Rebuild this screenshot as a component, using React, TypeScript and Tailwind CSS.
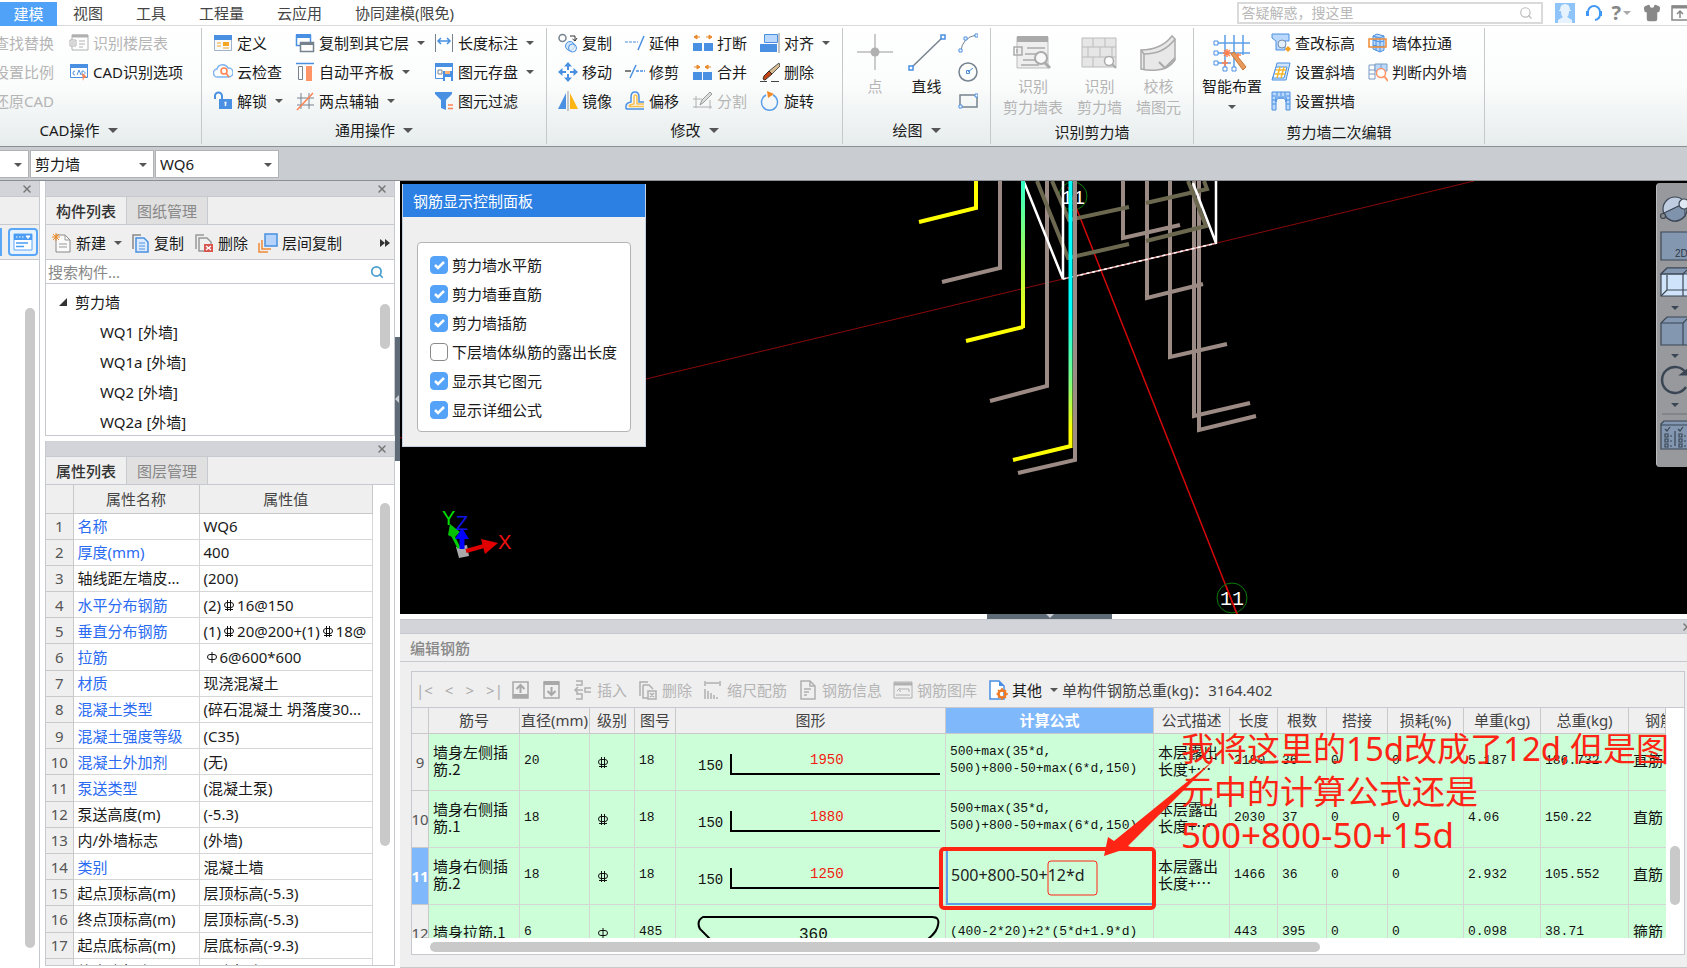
import React from 'react';
import { Search, Shirt, X } from 'lucide-react';

const BLUE = '#4a90e2';
const GREY = '#b0b0b0';
const INK = '#76838f';

/* 20x20 的工具图标 */
const icons: Record<string, React.ReactNode> = {
  floorTable: (
    <g stroke={GREY} fill="none">
      <path d="M3 2h16v15H3z" />
      <path d="M3 3h16" strokeWidth="3" />
      <path d="M1 7h6v6H1z" fill="#fff" />
      <path d="M3 8v4M5 8v4M10 8h6M10 11h6M10 14h4" />
    </g>
  ),
  cadOptions: (
    <g>
      <path d="M1.500 2.500h17v13h-17z" fill="#fff" stroke={BLUE} />
      <path d="M1 2h18v4H1z" fill={BLUE} />
      <path d="M6 9a2 2 0 1 0 0 4M8 13l2-5 2 5M13 9v4c4 0 4-4 0-4" fill="none" stroke={BLUE} />
      <path d="M13 11l5 4-3 1-1 3z" fill="#ff8250" />
    </g>
  ),
  define: (
    <g>
      <path d="M1.500 2.500h17v15h-17z" fill="#f7f9fb" stroke="#9fb4c8" />
      <path d="M1 2h18v5H1z" fill={BLUE} />
      <path d="M4 10h4M4 13h4M10 15h6" stroke="#f5a623" />
      <path d="M10 9h6v4h-6z" fill="#f5a623" />
    </g>
  ),
  cloud: (
    <g fill="none">
      <path d="M5 15a4 4 0 0 1-1-8 6 6 0 0 1 11-1 4.500 4.500 0 0 1 1 9z" stroke="#7db4ef" strokeWidth="1.500" />
      <circle cx="11" cy="9" r="3" stroke="#ff8250" strokeWidth="1.500" />
      <path d="M13 11l3 4" stroke="#ff8250" strokeWidth="1.500" />
    </g>
  ),
  unlock: (
    <g>
      <path d="M2 8V5a3.500 3.500 0 0 1 7 0v4" fill="none" stroke={BLUE} strokeWidth="2" />
      <path d="M6 8h13v10H6z" fill={BLUE} />
      <path d="M12.500 11v4M11.500 11.500h2" stroke="#fff" strokeWidth="1.500" />
    </g>
  ),
  copyFloor: (
    <g>
      <path d="M1.500 2.500h14v10h-14z" fill="#fff" stroke={BLUE} strokeWidth="1.500" />
      <path d="M1 1h15v4H1z" fill={BLUE} />
      <path d="M5.500 9.500h13v9h-13z" fill="#fff" stroke={INK} strokeWidth="1.500" />
      <path d="M5 9h14v3H5z" fill={INK} />
    </g>
  ),
  alignSlab: (
    <g>
      <path d="M1 1.500h18" stroke={BLUE} strokeWidth="1.500" />
      <path d="M3.500 4.500h4v13h-4z" fill="#fff" stroke={INK} />
      <path d="M11 4h6v15h-6z" fill="#ff9466" />
    </g>
  ),
  auxAxis: (
    <g stroke={INK} fill="none">
      <path d="M6 2v16M14 2v16M2 7h17M2 14h17" />
      <path d="M2 19L18 2" stroke="#ff8250" strokeWidth="1.500" />
    </g>
  ),
  dimension: (
    <g fill="none">
      <path d="M1.500 1v18M18.500 1v18" stroke={INK} />
      <path d="M4 8h12M7 5L4 8l3 3M13 5l3 3-3 3" stroke={BLUE} strokeWidth="1.500" />
    </g>
  ),
  save: (
    <g>
      <path d="M1.500 2.500h17v14h-17z" fill="#fff" stroke={BLUE} />
      <path d="M1 1h18v4H1z" fill={BLUE} />
      <path d="M4 8h4v4H4z" fill="none" stroke={INK} />
      <path d="M9 9h10v10H9z" fill={BLUE} />
      <path d="M11 9h5v3h-5z" fill="#ffb27a" />
      <path d="M11 15h6v4h-6z" fill="#fff" />
    </g>
  ),
  filter: (
    <g>
      <path d="M1 1h17v2l-6 6v10l-5-2V9L1 3z" fill={BLUE} />
      <path d="M14 14h5M14 17.500h5" stroke="#ff8250" strokeWidth="1.500" />
    </g>
  ),
  copy: (
    <g fill="none">
      <circle cx="4.500" cy="5" r="3.500" stroke={INK} strokeWidth="1.500" />
      <path d="M12 3h5v5M14.500 6L17 8l2-3" stroke="#333" />
      <circle cx="12" cy="13" r="4.500" fill="#cfe5fb" stroke={BLUE} />
      <circle cx="14.500" cy="15" r="4" fill="#e9f4fe" fillOpacity=".6" stroke={BLUE} />
    </g>
  ),
  move: (
    <g fill={BLUE}>
      <path d="M10 0l4 4.500H6zM10 20l4-4.500H6zM0 10l4.500-4v8zM20 10l-4.500-4v8z" />
      <path d="M10 4v4M10 12v4M4 10h4M12 10h4" stroke={BLUE} strokeWidth="2" />
    </g>
  ),
  mirror: (
    <g>
      <path d="M8 2v16H0z" fill={BLUE} />
      <path d="M12 2v16h8z" fill="#fdb515" />
      <path d="M10 0v20" stroke="#999" />
    </g>
  ),
  extend: (
    <g fill="none">
      <path d="M0 9h13" stroke={BLUE} strokeDasharray="3 1" />
      <path d="M19 3l-6 14" stroke={BLUE} strokeWidth="1.500" />
    </g>
  ),
  trim: (
    <g fill="none" strokeWidth="1.500">
      <path d="M0 9h6" stroke="#555" />
      <path d="M11 3L5 16" stroke={BLUE} />
      <path d="M11 9h9" stroke={BLUE} strokeDasharray="3 1" />
    </g>
  ),
  offset: (
    <g fill="none" strokeLinejoin="round">
      <path d="M1 18v-3q0-3 5-4V6q0-5 4-5t4 5v5h5M1 18h18" stroke={BLUE} strokeWidth="1.500" />
      <path d="M4 15.500q0-2 5-2.500V6q0-2 1-2 2 0 2 2v7h7M4 15.500h15" stroke="#f9bf4d" strokeWidth="1.500" />
    </g>
  ),
  breakUp: (
    <g>
      <path d="M0 10h9v8H0zM11 10h9v8h-9z" fill={BLUE} />
      <path d="M1 4h6M1 4l3-2v4zM13 4h6M19 4l-3-2v4z" fill="#e8892b" stroke="#e8892b" />
    </g>
  ),
  merge: (
    <g>
      <path d="M0 10h9v8H0zM10 10h9v8h-9z" fill={BLUE} />
      <path d="M1 5h6M7 5L4 3v4zM12 5h6M12 5l3-2v4z" fill="#e8892b" stroke="#e8892b" />
    </g>
  ),
  split: (
    <g stroke={GREY} fill="none">
      <path d="M3 5v12M17 9v9M0 8h9M0 16h19" />
      <path d="M7 14l2-5 8-8 2 2-8 8z" fill="#ddd" stroke="#999" />
    </g>
  ),
  align: (
    <g>
      <path d="M4.500 1.500h13v8h-13z" fill="#b9d8fb" stroke={BLUE} />
      <path d="M0 11h17v8H0z" fill={BLUE} />
      <path d="M19 0v20" stroke="#888" />
    </g>
  ),
  erase: (
    <g>
      <path d="M19 1L9 9l3 3 8-8z" fill="#d6bb92" stroke="#555" />
      <path d="M9 9l-5 5q-2 4 1 4l7-6z" fill="#c4471b" stroke="#3b2a1c" />
      <path d="M0 19.500h7M11 19.500h8" stroke="#444" />
    </g>
  ),
  rotate: (
    <g fill="none">
      <path d="M13 4a8 8 0 1 1-7 0" stroke="#5b9fe8" strokeWidth="1.500" />
      <path d="M7 0l7 3-6 4z" fill="#f08a24" />
    </g>
  ),
  arc: (
    <g fill="none" stroke={BLUE}>
      <path d="M3 18Q4 5 18 2" stroke={INK} />
      <path d="M1 16h3v3H1zM6 4h3v3H6zM17 1h3v3h-3z" fill="#fff" />
    </g>
  ),
  circle: (
    <g fill="none">
      <circle cx="10" cy="10" r="9" stroke={INK} strokeWidth="1.500" />
      <path d="M10 10l5-4M8.500 8.500h3v3h-3z" stroke={BLUE} />
    </g>
  ),
  rect: (
    <g fill="none">
      <path d="M2 4h17v12H2z" stroke={INK} strokeWidth="1.500" />
      <path d="M1 14h3v3H1zM17 3h3v3h-3z" fill="#fff" stroke={BLUE} />
    </g>
  ),
  elevation: (
    <g>
      <path d="M1 1h17v7h-4v9H5V8L1 5z" fill="#b9d8fb" stroke={BLUE} />
      <circle cx="11" cy="11" r="4" fill="#e3effb" stroke="#7b8ea8" />
      <path d="M17 13l3 3-3 3-3-3z" fill="#f5a11f" />
    </g>
  ),
  inclined: (
    <g fill="none">
      <path d="M6 1h13l-4 17H1L5 5z" fill="#cfe4fb" stroke={BLUE} />
      <path d="M5 5h11l-3 11H2z" fill="#fff" stroke={BLUE} />
      <path d="M5 8h10M4 12h10M9 5L6 16M13 5l-3 11" stroke="#f5b72a" strokeWidth="1.500" />
    </g>
  ),
  arch: (
    <g>
      <path d="M1 1h18v18h-4V7H5v12H1z" fill="#b9d8fb" stroke={BLUE} />
      <path d="M5 11q0-4 5-4t5 4V6H5z" fill="#b9d8fb" stroke={BLUE} />
      <path d="M1 5h4M1 9h4M1 13h4M15 5h4M15 9h4M15 13h4M6 1v4M10 1v4M14 1v4" stroke={BLUE} />
    </g>
  ),
  wallThrough: (
    <g fill="none" stroke={BLUE}>
      <path d="M5 3l4-2 7 2v14l-4 2-7-3z" fill="#b9d8fb" />
      <path d="M5 7l7 2 4-1M5 12l7 2 4-1M12 5v14M8 4v13M5 3l7 2 4-2" />
      <path d="M1 6h17v8H1z" stroke="#f08a34" strokeWidth="1.500" />
    </g>
  ),
  innerOuter: (
    <g fill="none" stroke="#7b9cc2">
      <path d="M1 3h6v14H1zM1 8h6M1 12h6" />
      <path d="M7 2h12v7H7zM13 2v7" fill="#b9d8fb" />
      <circle cx="13" cy="11" r="4.500" fill="#fff" stroke="#ff9466" strokeWidth="1.500" />
      <path d="M16 14l4 5" stroke="#ff9466" strokeWidth="2" />
    </g>
  ),
  newDoc: (
    <g fill="none">
      <path d="M4 2h9l5 5v12H4z" fill="#fafafa" stroke="#888" />
      <path d="M13 2v5h5M7 11h8M7 14h8" stroke="#999" />
      <path d="M4 0v8M0 4h8M1 1l6 6M7 1L1 7" stroke="#f08a24" />
    </g>
  ),
  copyDoc: (
    <g fill="none">
      <path d="M3 16V2h8" stroke="#888" strokeWidth="1.500" />
      <path d="M6 5h8l4 4v10H6z" fill="#dcebfc" stroke={BLUE} strokeWidth="1.500" />
      <path d="M9 10h6M9 13h6M9 16h6" stroke={BLUE} />
    </g>
  ),
  deleteDoc: (
    <g fill="none">
      <path d="M2 16V2h8M5 5h8l4 4v9H5z" stroke="#999" strokeWidth="1.500" />
      <path d="M10 11h9v8h-9z" fill="#d9534f" />
      <path d="M12 13l5 4M17 13l-5 4" stroke="#fff" strokeWidth="1.500" />
    </g>
  ),
  layers: (
    <g fill="none">
      <path d="M7 1h12v12H7z" fill="#b5d3fb" stroke={BLUE} strokeWidth="1.500" />
      <path d="M4 7v9h9M1 10v9h9" stroke="#f08a34" strokeWidth="1.500" />
    </g>
  ),
  up: (
    <g fill="none" stroke="#a8a8a8">
      <path d="M2 2h15v16H2z" strokeWidth="1.500" />
      <path d="M2 16h15" strokeWidth="4" />
      <path d="M9.500 13V5M5.500 9l4-4 4 4" strokeWidth="2" />
    </g>
  ),
  down: (
    <g fill="none" stroke="#a8a8a8">
      <path d="M2 2h15v16H2z" strokeWidth="1.500" />
      <path d="M2 3h15" strokeWidth="4" />
      <path d="M9.500 7v8M5.500 11l4 4 4-4" strokeWidth="2" />
    </g>
  ),
  insert: (
    <g fill="none" stroke={GREY} strokeWidth="1.500">
      <path d="M3 1h6v4H3M3 14h6v5H3M2 10h8M5 7l-3 3 3 3M18 8h-6v4h6" />
    </g>
  ),
  deleteGrey: (
    <g fill="none" stroke={GREY} strokeWidth="1.500">
      <path d="M2 16V2h8M5 5h6l4 4M5 5v13h5M10 11h8v8h-8zM12 13l4 4M16 13l-4 4" />
    </g>
  ),
  scale: (
    <g fill="none" stroke={GREY}>
      <path d="M2 1v5M17 1v5M3 3h13M2 9v10M5 11v8M8 13v6M11 15v4M14 17v2" strokeWidth="1.500" />
    </g>
  ),
  info: (
    <g fill="none" stroke={GREY} strokeWidth="1.500">
      <path d="M3 1h9l5 5v13H3zM12 1v5h5M6 9h7M6 12h5M6 15h3" />
    </g>
  ),
  library: (
    <g fill="none" stroke={GREY}>
      <path d="M1 2h18v16H1z" />
      <path d="M1 4h18" strokeWidth="3" />
      <path d="M4 11l3-3v4M8 9h8v3M3 15h14" />
    </g>
  ),
  other: (
    <g fill="none">
      <path d="M2 1h9l5 5v13H2z" fill="#fff" stroke={BLUE} strokeWidth="1.500" />
      <path d="M11 1l5 5h-5z" fill={BLUE} />
      <circle cx="14" cy="14" r="3.500" stroke="#ef7a23" strokeWidth="2.500" />
      <path d="M14 8v3M14 17v3M8.500 14h3M17 14h3M10 10l2 2M16 16l2 2M18 10l-2 2M12 16l-2 2" stroke="#ef7a23" strokeWidth="1.500" />
    </g>
  ),
};

function Icon({ name }: { name: string }) {
  return (
    <svg viewBox="0 0 20 20" className="size-5 shrink-0" aria-hidden="true">
      {icons[name]}
    </svg>
  );
}

function Caret({ big }: { big?: boolean }) {
  return big ? (
    <span className="ml-2 border-x-5 border-t-5 border-x-transparent border-t-[#555]" />
  ) : (
    <span className="mx-1 border-x-4 border-t-4 border-x-transparent border-t-[#555]" />
  );
}

interface ToolProps {
  icon?: string;
  label: string;
  arrow?: boolean;
  muted?: boolean;
}

function Tool({ icon, label, arrow, muted }: ToolProps) {
  return (
    <button
      type="button"
      className={`flex h-[29px] items-center gap-1 whitespace-nowrap ${muted ? 'text-[#b5b5b5]' : 'text-[#1a1a1a]'}`}
    >
      {icon && <Icon name={icon} />}
      <span>{label}</span>
      {arrow && <Caret />}
    </button>
  );
}

interface GroupProps {
  label: string;
  arrow?: boolean;
  className: string;
  bodyClass?: string;
  children: React.ReactNode;
}

function Group({ label, arrow, className, bodyClass = '', children }: GroupProps) {
  return (
    <section className={`my-0.5 flex shrink-0 flex-col border-r border-[#c6c9cb] ${className}`}>
      <div className={`flex h-[88px] items-start ${bodyClass}`}>{children}</div>
      <div className={`flex h-7 items-center justify-center text-[#1a1a1a] ${arrow ? '' : 'pt-1'}`}>
        {label}
        {arrow && <Caret big />}
      </div>
    </section>
  );
}

interface BigToolProps {
  lines: string[];
  muted?: boolean;
  arrow?: boolean;
  children: React.ReactNode;
}

function BigTool({ lines, muted, arrow, children }: BigToolProps) {
  return (
    <button
      type="button"
      className={`flex flex-col items-center pt-1 leading-[21px] whitespace-nowrap ${muted ? 'text-[#b5b5b5]' : 'text-[#1a1a1a]'}`}
    >
      <svg viewBox="0 0 40 40" className="mb-1 size-10" fill="none" aria-hidden="true">
        {children}
      </svg>
      {lines.map((line) => (
        <span key={line}>{line}</span>
      ))}
      {arrow && <span className="mt-2 border-x-4 border-t-4 border-x-transparent border-t-[#555]" />}
    </button>
  );
}

const menuTabs = ['视图', '工具', '工程量', '云应用', '协同建模(限免)'];

function TopBar() {
  return (
    <header className="flex h-[26px] shrink-0 items-center border-b border-[#d9dadb] bg-white text-[#444]">
      <nav className="flex h-full items-center gap-[33px]">
        <button type="button" className="mt-0.5 -mr-[17px] h-6 w-[57px] bg-[#4fa2f7] text-white">
          建模
        </button>
        {menuTabs.map((tab) => (
          <button key={tab} type="button" className="whitespace-nowrap">
            {tab}
          </button>
        ))}
      </nav>
      <div className="ml-auto flex items-center">
        <label className="flex h-[22px] w-[306px] items-center border-2 border-[#dadada] pr-2">
          <input
            aria-label="搜索"
            placeholder="答疑解惑，搜这里"
            className="min-w-0 flex-1 px-0.5 text-[14px] outline-none placeholder:text-[#b8b8b8]"
          />
          <Search className="size-3.5 text-[#bbb]" />
        </label>
        <button type="button" aria-label="用户" className="ml-3 size-5 bg-[#8fc4fb]">
          <svg viewBox="0 0 20 20">
            <path d="M5 7q0-6 5-6t5 6H4h12v1h-2q0 5-2 6l5 3v3H3v-3l5-3q-2-1-2-6H4V7z" fill="#e6f2fe" />
          </svg>
        </button>
        <button type="button" aria-label="客服" className="ml-2.5">
          <svg viewBox="0 0 18 18" className="size-[18px]" fill="none" stroke="#3f97f6">
            <path d="M3 10V8a6 6 0 0 1 12 0v2q0 5-5 6" strokeWidth="2" />
            <path d="M2.500 7v5M15.500 7v5" strokeWidth="3" />
          </svg>
        </button>
        <button type="button" aria-label="帮助" className="ml-2 flex items-center text-[20px] font-bold text-[#888]">
          ?<span className="ml-0.5 border-x-4 border-t-4 border-x-transparent border-t-[#aaa]" />
        </button>
        <button type="button" aria-label="皮肤" className="ml-3">
          <Shirt className="size-[18px] fill-[#888] text-[#888]" />
        </button>
        <button type="button" aria-label="收起" className="ml-2.5 w-4 overflow-hidden">
          <svg viewBox="0 0 20 18" className="h-[18px] w-5 max-w-none" fill="none" stroke="#888">
            <path d="M1 2h18v14H1z" strokeWidth="1.500" />
            <path d="M1 3h18" strokeWidth="3" />
            <path d="M9 14V8M6 10l3-3 3 3" strokeWidth="1.500" />
          </svg>
        </button>
      </div>
    </header>
  );
}

function Ribbon() {
  return (
    <div className="flex h-[121px] shrink-0 overflow-hidden border-b border-[#8d9093] bg-linear-to-b from-white via-[#fbfcfc] to-[#e6ecec]">
      <Group label="CAD操作" arrow className="w-[202px] pr-11">
        <div className="-ml-1.5 w-[75px] shrink-0">
          <Tool label="查找替换" muted />
          <Tool label="设置比例" muted />
          <Tool label="还原CAD" muted />
        </div>
        <div>
          <Tool icon="floorTable" label="识别楼层表" muted />
          <Tool icon="cadOptions" label="CAD识别选项" />
        </div>
      </Group>

      <Group label="通用操作" arrow className="w-[345px]" bodyClass="pl-[11px]">
        <div className="w-[82px] shrink-0">
          <Tool icon="define" label="定义" />
          <Tool icon="cloud" label="云检查" />
          <Tool icon="unlock" label="解锁" arrow />
        </div>
        <div className="w-[139px] shrink-0">
          <Tool icon="copyFloor" label="复制到其它层" arrow />
          <Tool icon="alignSlab" label="自动平齐板" arrow />
          <Tool icon="auxAxis" label="两点辅轴" arrow />
        </div>
        <div>
          <Tool icon="dimension" label="长度标注" arrow />
          <Tool icon="save" label="图元存盘" arrow />
          <Tool icon="filter" label="图元过滤" />
        </div>
      </Group>

      <Group label="修改" arrow className="w-[296px]" bodyClass="pl-[11px]">
        <div className="w-[67px] shrink-0">
          <Tool icon="copy" label="复制" />
          <Tool icon="move" label="移动" />
          <Tool icon="mirror" label="镜像" />
        </div>
        <div className="w-[68px] shrink-0">
          <Tool icon="extend" label="延伸" />
          <Tool icon="trim" label="修剪" />
          <Tool icon="offset" label="偏移" />
        </div>
        <div className="w-[67px] shrink-0">
          <Tool icon="breakUp" label="打断" />
          <Tool icon="merge" label="合并" />
          <Tool icon="split" label="分割" muted />
        </div>
        <div>
          <Tool icon="align" label="对齐" arrow />
          <Tool icon="erase" label="删除" />
          <Tool icon="rotate" label="旋转" />
        </div>
      </Group>

      <Group label="绘图" arrow className="w-[148px]">
        <div className="flex w-full justify-between pr-3 pl-3">
          <BigTool lines={['点']} muted>
            <path d="M20 2v36M2 20h36" stroke="#bbb" strokeWidth="1.500" />
            <circle cx="20" cy="20" r="4.500" fill="#b0b0b0" />
          </BigTool>
          <BigTool lines={['直线']}>
            <path d="M4 36L36 5" stroke={INK} strokeWidth="1.500" />
            <path d="M2 34h4v4H2zM34 3h4v4h-4z" fill="#fff" stroke={BLUE} strokeWidth="1.500" />
          </BigTool>
          <div className="flex flex-col">
            <button type="button" aria-label="圆弧" className="flex h-[29px] items-center">
              <Icon name="arc" />
            </button>
            <button type="button" aria-label="圆" className="flex h-[29px] items-center">
              <Icon name="circle" />
            </button>
            <button type="button" aria-label="矩形" className="flex h-[29px] items-center">
              <Icon name="rect" />
            </button>
          </div>
        </div>
      </Group>

      <Group label="识别剪力墙" className="w-[203px]">
        <div className="flex w-full justify-between px-3">
          <BigTool lines={['识别', '剪力墙表']} muted>
            <path d="M4 5h31v31H4z" fill="#eee" stroke="#bbb" />
            <path d="M4 4h31v6H4z" fill="#aaa" />
            <path d="M1 15h8v8H1zM4 17v4M14 16h18M12 22h14M10 28h12M8 33h18" stroke="#aaa" strokeWidth="1.500" />
            <circle cx="28" cy="26" r="6" fill="#f8f8f8" stroke="#aaa" strokeWidth="2" />
            <path d="M32 31l5 5" stroke="#aaa" strokeWidth="3" />
          </BigTool>
          <BigTool lines={['识别', '剪力墙']} muted>
            <path d="M3 6h34v29H3z" fill="#e6e6e6" stroke="#bbb" />
            <path d="M3 15h34M3 25h34M14 6v9M26 6v9M9 15v10M21 15v10M33 15v10M14 25v10" stroke="#bbb" />
            <circle cx="30" cy="29" r="4.500" fill="#fff" stroke="#aaa" strokeWidth="1.500" />
            <path d="M33 32l4 4" stroke="#aaa" strokeWidth="2" />
          </BigTool>
          <BigTool lines={['校核', '墙图元']} muted>
            <path d="M3 18q20 0 31-14l3 3v21q-6 9-18 10-8 1-16-1z" fill="#e8e8e8" stroke="#aaa" strokeWidth="1.500" />
            <path d="M3 18l3 4q20 0 31-15M6 22v15" stroke="#aaa" strokeWidth="1.500" />
            <path d="M21 30l6 6 10-10" stroke="#aaa" strokeWidth="2" />
          </BigTool>
        </div>
      </Group>

      <Group label="剪力墙二次编辑" className="w-[291px]" bodyClass="pl-2">
        <div className="w-[69px] shrink-0">
          <BigTool lines={['智能布置']} arrow>
            <path d="M5 11h33M5 21h33M5 31h14M13 3v33M22 3v33M31 3v20" stroke="#5b9fe8" strokeWidth="1.500" />
            <path d="M2 9h4v4H2zM2 19h4v4H2zM2 29h4v4H2zM11 35h4v4h-4zM20 35h4v4h-4z" fill="#fff" stroke={BLUE} />
            <path d="M19 22l3-2 12 15-3 3z" fill="#e79a5c" stroke="#c9742f" />
            <path d="M15 17v8M11 21h8M12 18l6 6M18 18l-6 6M26 21v5M24 23h5M13 28v6M10 31h6" stroke="#ff8250" strokeWidth="1.500" />
          </BigTool>
        </div>
        <div className="w-[97px] shrink-0">
          <Tool icon="elevation" label="查改标高" />
          <Tool icon="inclined" label="设置斜墙" />
          <Tool icon="arch" label="设置拱墙" />
        </div>
        <div>
          <Tool icon="wallThrough" label="墙体拉通" />
          <Tool icon="innerOuter" label="判断内外墙" />
        </div>
      </Group>
    </div>
  );
}

function Combo({ label, value, className }: { label: string; value: string; className: string }) {
  return (
    <div className={`relative h-7 border border-[#b0b3b6] bg-white ${className}`}>
      <select aria-label={label} className="h-full w-full appearance-none px-1 text-[#1a1a1a] outline-none">
        <option>{value}</option>
      </select>
      <span className="pointer-events-none absolute top-3 right-1.5 border-x-4 border-t-4 border-x-transparent border-t-[#555]" />
    </div>
  );
}

function PanelBar() {
  return (
    <div className="flex h-4 shrink-0 items-center justify-end border-b border-[#c6c9ce] bg-[#d3d4d9] pr-1.5">
      <button type="button" aria-label="关闭">
        <X className="size-3 text-[#777]" strokeWidth={3} />
      </button>
    </div>
  );
}

function PanelTabs({ active, other }: { active: string; other: string }) {
  return (
    <div className="flex h-7 shrink-0 border-b border-[#c6c9ce] bg-[#efefef]">
      <button type="button" className="w-20 font-medium text-[#333]">
        {active}
      </button>
      <button type="button" className="w-[82px] border-x border-[#c6c9ce] bg-[#e0e0e0] text-[#888]">
        {other}
      </button>
    </div>
  );
}

const components = ['WQ1 [外墙]', 'WQ1a [外墙]', 'WQ2 [外墙]', 'WQ2a [外墙]'];

function ComponentPanel() {
  return (
    <section className="flex h-[255px] shrink-0 flex-col border border-t-0 border-[#c6c9ce] bg-white">
      <PanelBar />
      <PanelTabs active="构件列表" other="图纸管理" />
      <div className="flex h-[35px] shrink-0 items-center border-b border-[#c6c9ce] bg-[#efefef] pt-0.5 pl-1.5 text-[#444]">
        <Tool icon="newDoc" label="新建" arrow />
        <span className="w-1" />
        <Tool icon="copyDoc" label="复制" />
        <span className="w-2.5" />
        <Tool icon="deleteDoc" label="删除" />
        <span className="w-2.5" />
        <Tool icon="layers" label="层间复制" />
        <button type="button" aria-label="更多" className="mr-1 ml-auto flex">
          <span className="border-y-4 border-l-5 border-y-transparent border-l-[#333]" />
          <span className="border-y-4 border-l-5 border-y-transparent border-l-[#333]" />
        </button>
      </div>
      <label className="flex h-6 shrink-0 items-center border-b border-[#c6c9ce] pr-2.5">
        <input
          aria-label="搜索构件"
          placeholder="搜索构件..."
          className="min-w-0 flex-1 pl-0.5 outline-none placeholder:text-[#888]"
        />
        <Search className="size-3.5 text-[#4a9fd0]" strokeWidth={3} />
      </label>
      <div className="flex min-h-0 flex-1 justify-between">
        <ul className="pt-[3px] pl-3 leading-[30px] text-[#1a1a1a]">
          <li>
            <span className="flex items-center gap-[7px]">
              <svg viewBox="0 0 10 10" className="size-2.5">
                <path d="M9 1v8H1z" fill="#333" />
              </svg>
              剪力墙
            </span>
            <ul className="pl-[42px]">
              {components.map((name) => (
                <li key={name}>{name}</li>
              ))}
            </ul>
          </li>
        </ul>
        <div className="mt-5 mr-1 h-[45px] w-2.5 rounded-full bg-[#c9c9c9]" />
      </div>
    </section>
  );
}

/* 钢筋等级符号 */
function Rebar({ plain }: { plain?: boolean }) {
  return (
    <svg viewBox="0 0 12 12" className="inline size-3" fill="none" stroke="#111">
      <rect x="1.500" y="2.500" width="9" height="5" rx="2.500" />
      {plain ? <path d="M6 0v11" /> : <path d="M4.500 0v11M7.500 0v11M2 9.500h8" />}
    </svg>
  );
}

/* 属性值里的等级符号比正文略高 */
function Grade({ plain }: { plain?: boolean }) {
  return (
    <span className="mx-0.5 inline-block pb-1 align-middle leading-3">
      <Rebar plain={plain} />
    </span>
  );
}

const properties: { name: string; value: React.ReactNode; blue?: boolean }[] = [
  { name: '名称', value: 'WQ6', blue: true },
  { name: '厚度(mm)', value: '400', blue: true },
  { name: '轴线距左墙皮...', value: '(200)' },
  { name: '水平分布钢筋', value: <>(2)<Grade />16@150</>, blue: true },
  { name: '垂直分布钢筋', value: <>(1)<Grade />20@200+(1)<Grade />18@</>, blue: true },
  { name: '拉筋', value: <><Grade plain />6@600*600</>, blue: true },
  { name: '材质', value: '现浇混凝土', blue: true },
  { name: '混凝土类型', value: '(碎石混凝土 坍落度30...', blue: true },
  { name: '混凝土强度等级', value: '(C35)', blue: true },
  { name: '混凝土外加剂', value: '(无)', blue: true },
  { name: '泵送类型', value: '(混凝土泵)', blue: true },
  { name: '泵送高度(m)', value: '(-5.3)' },
  { name: '内/外墙标志', value: '(外墙)' },
  { name: '类别', value: '混凝土墙', blue: true },
  { name: '起点顶标高(m)', value: '层顶标高(-5.3)' },
  { name: '终点顶标高(m)', value: '层顶标高(-5.3)' },
  { name: '起点底标高(m)', value: '层底标高(-9.3)' },
  { name: '终点底标高(m)', value: '层底标高(-9.3)' },
];

function PropertyPanel() {
  return (
    <section className="mt-[5px] flex min-h-0 flex-1 flex-col overflow-hidden border border-t-0 border-[#c6c9ce] bg-white">
      <PanelBar />
      <PanelTabs active="属性列表" other="图层管理" />
      <div className="flex min-h-0 flex-1 items-start justify-between overflow-hidden">
        <table className="h-[500px] w-[327px] table-fixed border-collapse leading-[22px] whitespace-nowrap text-[#1a1a1a]">
          <thead>
            <tr className="h-7 bg-[#efefef] text-[#444]">
              <th className="w-[27px] border-r border-b border-[#c9c9c9]" aria-label="序号" />
              <th className="w-[126px] border-r border-b border-[#c9c9c9] font-normal">属性名称</th>
              <th className="border-r border-b border-[#c9c9c9] font-normal">属性值</th>
            </tr>
          </thead>
          <tbody>
            {properties.map((row, i) => (
              <tr key={i}>
                <td className="border-r border-b border-[#c9c9c9] bg-[#efefef] text-center text-[#555]">{i + 1}</td>
                <td className={`border-r border-b border-[#d6d6d6] pl-1 ${row.blue ? 'text-[#2a6bf2]' : ''}`}>{row.name}</td>
                <td className="overflow-hidden border-r border-b border-[#d6d6d6] pl-1">{row.value}</td>
              </tr>
            ))}
          </tbody>
        </table>
        <div className="mt-[18px] mr-1 h-[343px] w-2.5 rounded-full bg-[#c9c9c9]" />
      </div>
    </section>
  );
}

function NavStrip() {
  return (
    <aside className="flex w-10 shrink-0 flex-col border-r border-[#c6c9ce] bg-white">
      <PanelBar />
      <div className="h-7 shrink-0 border-b border-[#c6c9ce] bg-[#efefef]" />
      <div className="flex h-[35px] shrink-0 items-center gap-1.5 border-b border-[#c6c9ce] bg-[#efefef]">
        <span className="h-7 w-0.5 bg-[#5aa7f8]" />
        <button
          type="button"
          aria-label="构件视图"
          className="flex h-7 w-[30px] items-center justify-center rounded border-2 border-[#5aa7f8] bg-[#e8f3fe]"
        >
          <svg viewBox="0 0 20 18" className="h-[18px] w-5">
            <path d="M1 1h18v16H1z" fill="#fff" stroke="#5aa7f8" />
            <path d="M1 1h18v6H1z" fill="#4a9cf5" />
            <path d="M3 4h1.500M6 4h1.500M9 4h1.500M13 3h4l-2 2.500z" stroke="#fff" fill="#fff" />
            <path d="M3 10h12M3 13.500h8" stroke="#4a9cf5" strokeWidth="1.500" />
          </svg>
        </button>
      </div>
      <div className="mt-12 mr-1 mb-5 w-2.5 flex-1 self-end rounded-full bg-[#c9c9c9]" />
    </aside>
  );
}

const displayOptions = [
  { label: '剪力墙水平筋', on: true },
  { label: '剪力墙垂直筋', on: true },
  { label: '剪力墙插筋', on: true },
  { label: '下层墙体纵筋的露出长度', on: false },
  { label: '显示其它图元', on: true },
  { label: '显示详细公式', on: true },
];

function DisplayDialog() {
  return (
    <div
      role="dialog"
      aria-label="钢筋显示控制面板"
      className="absolute top-[3px] left-0.5 w-[244px] border border-t-0 border-[#c3d0e2] bg-[#efefef]"
    >
      <div className="flex h-[33px] items-center bg-[#2c7fe3] pl-2.5 text-white">钢筋显示控制面板</div>
      <div className="mx-3.5 mt-[25px] mb-3.5 rounded border border-[#b4b4b4] bg-white py-[7px] pl-3">
        {displayOptions.map((opt) => (
          <label key={opt.label} className="flex h-[29px] items-center gap-1 whitespace-nowrap text-[#1a1a1a]">
            <span className="relative flex size-[18px]">
              <input
                type="checkbox"
                defaultChecked={opt.on}
                className="peer size-[18px] appearance-none rounded-sm border border-[#8a8a8a] bg-white checked:border-[#55a3f8] checked:bg-[#55a3f8]"
              />
              <svg viewBox="0 0 18 18" className="pointer-events-none absolute inset-0 hidden peer-checked:block" fill="none">
                <path d="M5 9l3 3 6-6" stroke="#fff" strokeWidth="2.500" />
              </svg>
            </span>
            {opt.label}
          </label>
        ))}
      </div>
    </div>
  );
}

function Scene() {
  return (
    <svg className="absolute inset-0 h-full w-full" fill="none" aria-hidden="true">
      <defs>
        <linearGradient id="bar1" gradientUnits="userSpaceOnUse" x1="0" y1="181" x2="0" y2="327">
          <stop offset="0" stopColor="#2effc8" />
          <stop offset="0.600" stopColor="#b4ff48" />
          <stop offset="1" stopColor="#ff0" />
        </linearGradient>
        <linearGradient id="bar2" gradientUnits="userSpaceOnUse" x1="0" y1="310" x2="0" y2="430">
          <stop offset="0" stopColor="#0ff" />
          <stop offset="0.600" stopColor="#80ff80" />
          <stop offset="1" stopColor="#ff0" />
        </linearGradient>
      </defs>
      <g transform="translate(-400 -181)">
        <path d="M400 438L1063 279L1217 243L1474 181" stroke="#8a0a0a" />
        <circle cx="1073" cy="196" r="14" stroke="#0a7d0a" />
        <text x="1061" y="204" fill="#fff" className="font-['Liberation_Mono'] text-[20px]">11</text>
        <path d="M1068 187L1237 614" stroke="#d40808" strokeWidth="1.500" />

        <g stroke="#9c8a84" strokeWidth="4">
          <path d="M1000 181V268L942 282M1047 181V386L990 401" />
          <path d="M1123 181V238L1180 225M1147 181V298L1203 284M1170 181V357L1227 344" />
          <path d="M1194 181V416L1250 403M1199 181V430L1256 416" />
        </g>
        <g stroke="#6b684f" strokeWidth="4">
          <path d="M1037 181L1068 258L1129 244M1052 181L1069 220L1129 207" />
          <path d="M1146 203L1207 189L1204 181M1146 241L1206 226L1188 181" />
        </g>
        <path d="M1024 182L1063 279V181M1193 183L1216 243V181" stroke="#fff" strokeWidth="2.500" />
        <path d="M1063 279L1217 243" stroke="#e9a9a9" strokeWidth="1.500" />
        <path d="M1063 279L1217 243" stroke="#fff" strokeWidth="1.500" strokeDasharray="3 3" />
        <path d="M1075 181V460L1018 473" stroke="#9c8a84" strokeWidth="4" />
        <g strokeWidth="4">
          <path d="M976 181V208L919 222M1023 327L966 341M1071 446L1013 460" stroke="#ff0" />
          <path d="M1023 181L1023.010 328" stroke="url(#bar1)" />
          <path d="M1070.500 181L1070.510 448" stroke="url(#bar2)" />
        </g>

        <circle cx="1232" cy="598" r="15" stroke="#0a7d0a" />
        <text x="1220" y="605" fill="#fff" className="font-['Liberation_Mono'] text-[20px]">11</text>
        <path d="M1226 586L1237 614" stroke="#d40808" strokeWidth="1.500" />

        {/* 坐标轴 */}
        <path d="M456 547l11-2 2 11-10 2z" fill="#a9a9a9" />
        <path d="M466 551L484 546" stroke="#e00000" strokeWidth="4" />
        <path d="M481 539L498 543L485 554z" fill="#e00000" />
        <path d="M459 548L452 534" stroke="#00d000" strokeWidth="3" />
        <path d="M450 524L460 532L454 538L448 535z" fill="#00c000" />
        <path d="M462 549V536" stroke="#00f" strokeWidth="5" />
        <path d="M462 528L469 539H455z" fill="#00f" />
        <g className="font-['Liberation_Sans'] text-[20px]">
          <text x="442" y="525" fill="#00e000">Y</text>
          <text x="456" y="530" fill="#1414e6">Z</text>
          <text x="498" y="549" fill="#f01010">X</text>
        </g>
      </g>
    </svg>
  );
}

function ViewTools() {
  return (
    <div className="absolute top-0.5 right-0 h-[284px] w-[31px] overflow-hidden rounded-l border-l border-[#b9bbbd] bg-[#97999d]">
      <svg viewBox="0 0 32 284" className="h-[284px] w-8 max-w-none" fill="none" stroke="#3b4654" strokeWidth="1.200">
        <circle cx="18" cy="26" r="12" fill="#c0cde0" />
        <path d="M7 30L28 20V33Q19 42 10 35z" fill="#7f93ad" />
        <circle cx="27" cy="21" r="5" fill="#dfe7f2" />
        <circle cx="6" cy="33" r="2.500" fill="#888" />
        <path d="M4 49h30v28H4z" fill="#8397b0" />
        <text x="18" y="74" fill="#2e3947" stroke="none" className="font-['Liberation_Sans'] text-[10px]">2D</text>
        <path d="M4 91l6-6h24v28H4z" fill="#cfe4fb" />
        <path d="M4 91l6-6h24v6z" fill="#8397b0" />
        <path d="M4 91h22v22M26 91l6-6M10 92v15h20M10 107l-6 6" />
        <path d="M4 140l6-6h24v28H4z" fill="#8397b0" />
        <path d="M4 140h22v22M26 140l6-6" />
        <path d="M29 204a13 13 0 1 1 0-14" strokeWidth="2.500" />
        <path d="M23 192h10v-8z" fill="#3b4654" />
        <path d="M14 123h8l-4 4zM14 171h8l-4 4zM14 220h8l-4 4z" fill="#3b4654" stroke="none" />
        <path d="M5 231h26" stroke="#6d7075" />
        <path d="M4 241l3-3h26v28H4z" fill="#8397b0" />
        <path d="M4 242h29M18 248v15M8 246l2 2 3-4M21 246l2 2 3-4" />
        <path d="M8 251h3v3H8zM8 256h3v3H8zM8 261h3v3H8zM22 251h3v3h-3zM22 256h3v3h-3zM22 261h3v3h-3zM13 253h2M13 258h2M13 263h2M27 253h2M27 258h2M27 263h2" />
      </svg>
    </div>
  );
}

interface RebarRow {
  no: number;
  name: string;
  dia: string;
  fig: string;
  shape: string;
  formula: string[];
  desc: string;
  nums: string[];
  kind: string;
}

const rebarRows: RebarRow[] = [
  { no: 9, name: '墙身左侧插筋.2', dia: '20', fig: '18', shape: '1950', formula: ['500+max(35*d,', '500)+800-50+max(6*d,150)'], desc: '本层露出长度+…', nums: ['2180', '36', '0', '0', '5.187', '186.732'], kind: '直筋' },
  { no: 10, name: '墙身右侧插筋.1', dia: '18', fig: '18', shape: '1880', formula: ['500+max(35*d,', '500)+800-50+max(6*d,150)'], desc: '本层露出长度+…', nums: ['2030', '37', '0', '0', '4.06', '150.22'], kind: '直筋' },
  { no: 11, name: '墙身右侧插筋.2', dia: '18', fig: '18', shape: '1250', formula: ['500+800-50+12*d'], desc: '本层露出长度+…', nums: ['1466', '36', '0', '0', '2.932', '105.552'], kind: '直筋' },
  { no: 12, name: '墙身拉筋.1', dia: '6', fig: '485', shape: '360', formula: ['(400-2*20)+2*(5*d+1.9*d)'], desc: '', nums: ['443', '395', '0', '0', '0.098', '38.71'], kind: '箍筋' },
];

const columns = [
  { label: '', width: 'w-[17px]' },
  { label: '筋号', width: 'w-[91px]' },
  { label: '直径(mm)', width: 'w-[70px]' },
  { label: '级别', width: 'w-[45px]' },
  { label: '图号', width: 'w-[41px]' },
  { label: '图形', width: '' },
  { label: '计算公式', width: 'w-[208px]', active: true },
  { label: '公式描述', width: 'w-[76px]' },
  { label: '长度', width: 'w-12' },
  { label: '根数', width: 'w-[49px]' },
  { label: '搭接', width: 'w-[61px]' },
  { label: '损耗(%)', width: 'w-[76px]' },
  { label: '单重(kg)', width: 'w-[77px]' },
  { label: '总重(kg)', width: 'w-[88px]' },
  { label: '钢筋', width: 'w-[37px]' },
];

const mono = "font-['Liberation_Mono','Noto_Sans_CJK_SC',monospace] text-[13px]";
const cell = 'border-r border-b border-[#d3d6d3] px-1 pb-1';
const song = "font-['Noto_Sans_CJK_SC',sans-serif]";

function Shape({ value, hooked }: { value: string; hooked?: boolean }) {
  return (
    <svg viewBox="0 0 268 56" className="block h-14 w-[268px]" fill="none" stroke="#000" strokeWidth="2">
      {hooked ? (
        <>
          <path d="M36 36L24 24q-4-8 3-12H256q8 0 6 8-1 7-10 14" />
          <text x="123" y="34" fill="#111" stroke="none" className="font-['Liberation_Mono'] text-[16px]">{value}</text>
        </>
      ) : (
        <>
          <path d="M55 20v20h209" />
          <text x="22" y="36" fill="#111" stroke="none" className="font-['Liberation_Mono'] text-[14px]">150</text>
          <text x="134" y="30" fill="#f21b12" stroke="none" className="font-['Liberation_Mono'] text-[14px]">{value}</text>
        </>
      )}
    </svg>
  );
}

function RebarTable() {
  return (
    <table className="w-full table-fixed border-separate border-spacing-0 leading-[17px] text-[#111]">
      <thead>
        <tr className="h-[26px] bg-[#efefef] text-[#444]">
          {columns.map((col, i) => (
            <th
              key={i}
              aria-label={col.label || '序号'}
              className={`overflow-hidden border-r border-b border-[#c9c9c9] whitespace-nowrap ${col.width} ${
                col.active ? 'bg-[#7fb8fb] font-bold text-white' : 'font-normal'
              } ${i === columns.length - 1 ? 'pl-4 text-left' : ''}`}
            >
              {col.label}
            </th>
          ))}
        </tr>
      </thead>
      <tbody className="bg-[#ccffd8]">
        {rebarRows.map((row) => {
          const current = row.no === 11;
          return (
            <tr key={row.no} className="h-[57px]">
              <td
                className={`border-r border-b border-[#c9c9c9] text-center ${
                  current ? 'bg-[#7fb8fb] font-bold text-white' : 'bg-[#efefef] text-[#555]'
                }`}
              >
                <span className="-mx-1">{row.no}</span>
              </td>
              <td className={`${cell} ${song}`}>{row.name}</td>
              <td className={`${cell} ${mono}`}>{row.dia}</td>
              <td className="border-r border-b border-[#d3d6d3] pl-[7px]">
                <Rebar plain={row.no === 12} />
              </td>
              <td className={`${cell} ${mono}`}>{row.fig}</td>
              <td className="overflow-hidden border-r border-b border-[#d3d6d3]">
                <Shape value={row.shape} hooked={row.no === 12} />
              </td>
              {current ? (
                <td className="border-b-2 border-l-2 border-[#5c9fe8] p-0">
                  <input
                    aria-label="计算公式"
                    defaultValue={row.formula[0]}
                    className="w-full pl-[3px] text-[16px] text-[#222] outline-none"
                  />
                </td>
              ) : (
                <td className={`${cell} ${mono} whitespace-nowrap`}>
                  {row.formula.map((line) => (
                    <div key={line}>{line}</div>
                  ))}
                </td>
              )}
              <td className={`border-r border-b border-[#d3d6d3] pb-1 pl-1 ${song}`}>{row.desc}</td>
              {row.nums.map((num, i) => (
                <td key={i} className={`${cell} ${mono}`}>
                  {num}
                </td>
              ))}
              <td className="overflow-hidden border-b border-[#d3d6d3] pb-1 pl-1 whitespace-nowrap">{row.kind}</td>
            </tr>
          );
        })}
      </tbody>
    </table>
  );
}

/* 用户标注 */
function Annotation() {
  return (
    <div className="pointer-events-none absolute inset-0 overflow-hidden">
      <svg className="absolute inset-0 h-full w-full" fill="none" stroke="#ff2414">
        <g transform="translate(-400 -614)">
          <path d="M1214 760L1128 846L1131 847L1104 856L1108 837L1114 841z" fill="#ff2414" stroke="none" />
          <rect x="941" y="849" width="213" height="59" rx="3" strokeWidth="4" />
          <rect x="1048" y="861" width="49" height="34" rx="3" />
        </g>
      </svg>
      <p className="absolute top-[113px] left-[781px] text-[33px] leading-[43px] whitespace-nowrap text-[#ff2414]">
        我将这里的15d改成了12d,但是图
        <br />
        元中的计算公式还是
        <br />
        <span className="text-[35px]">500+800-50+15d</span>
      </p>
    </div>
  );
}

function RebarEditor() {
  return (
    <section className="relative shrink-0">
      <div className="flex h-[5px] justify-center bg-white pl-3">
        <button type="button" aria-label="折叠" className="flex w-[125px] justify-center bg-[#5f6b77]">
          <span className="border-x-4 border-t-4 border-x-transparent border-t-[#c9ccd1]" />
        </button>
      </div>
      <div className="flex h-[15px] items-center justify-end border-y border-[#c6c9ce] bg-[#d3d4d9]">
        <button type="button" aria-label="关闭" className="-mr-1.5">
          <X className="size-3 text-[#777]" strokeWidth={3} />
        </button>
      </div>
      <div className="flex h-7 items-center border-b border-[#c6c9ce] bg-[#efefef] pl-2.5 font-medium text-[#888]">编辑钢筋</div>
      <div className="border-b border-[#c9c9c9] bg-[#efefef] pt-[9px] pr-0.5 pb-3 pl-[11px]">
        <div className="border border-[#c6c9ce] bg-white">
          <div className="flex h-[35px] items-center bg-[#efefef] pl-1 whitespace-nowrap text-[#444]">
            <div className="mr-2 flex gap-3 text-[#aaa]">
              <button type="button">|&lt;</button>
              <button type="button">&lt;</button>
              <button type="button">&gt;</button>
              <button type="button">&gt;|</button>
            </div>
            <div className="flex gap-[11px]">
              <button type="button" aria-label="上移"><Icon name="up" /></button>
              <button type="button" aria-label="下移"><Icon name="down" /></button>
              <Tool icon="insert" label="插入" muted />
              <Tool icon="deleteGrey" label="删除" muted />
              <Tool icon="scale" label="缩尺配筋" muted />
              <Tool icon="info" label="钢筋信息" muted />
              <Tool icon="library" label="钢筋图库" muted />
              <Tool icon="other" label="其他" arrow />
            </div>
            <span>单构件钢筋总重(kg)：3164.402</span>
          </div>
          <div className="flex h-[231px] border-t border-[#c6c9ce]">
            <div className="min-w-0 flex-1 overflow-hidden">
              <RebarTable />
            </div>
            <div className="flex w-[18px] justify-center bg-white">
              <div className="mt-[138px] h-[59px] w-2.5 rounded-full bg-[#c9c9c9]" />
            </div>
          </div>
          <div className="h-4 pt-1 pl-[18px]">
            <div className="h-2.5 w-[71%] rounded-full bg-[#c9c9c9]" />
          </div>
        </div>
      </div>
      <Annotation />
    </section>
  );
}

export default function App() {
  return (
    <div className="flex h-screen flex-col overflow-hidden bg-white font-['Noto_Sans','Noto_Sans_CJK_SC',sans-serif] text-[15px] leading-5">
      <TopBar />
      <Ribbon />

      {/* 楼层 / 构件选择 */}
      <div className="flex h-[34px] shrink-0 items-center gap-px border-b border-[#8d9093] bg-[#c9ccd1]">
        <Combo label="楼层" value="" className="w-[29px] border-l-0" />
        <Combo label="构件类型" value="剪力墙" className="w-[124px]" />
        <Combo label="构件" value="WQ6" className="w-[124px]" />
      </div>

      <div className="flex min-h-0 flex-1">
        <NavStrip />
        <div className="ml-[5px] flex w-[350px] shrink-0 flex-col pb-0.5">
          <ComponentPanel />
          <PropertyPanel />
        </div>
        <div className="w-[5px] shrink-0 pt-[156px]">
          <button type="button" aria-label="收起侧栏" className="flex h-[124px] w-full items-center bg-[#5f6b77]">
            <span className="border-y-4 border-r-4 border-y-transparent border-r-[#c9ccd1]" />
          </button>
        </div>
        <main className="flex min-w-0 flex-1 flex-col">
          <div className="relative min-h-0 flex-1 overflow-hidden bg-black">
            <Scene />
            <DisplayDialog />
            <ViewTools />
          </div>
          <RebarEditor />
        </main>
      </div>
    </div>
  );
}
